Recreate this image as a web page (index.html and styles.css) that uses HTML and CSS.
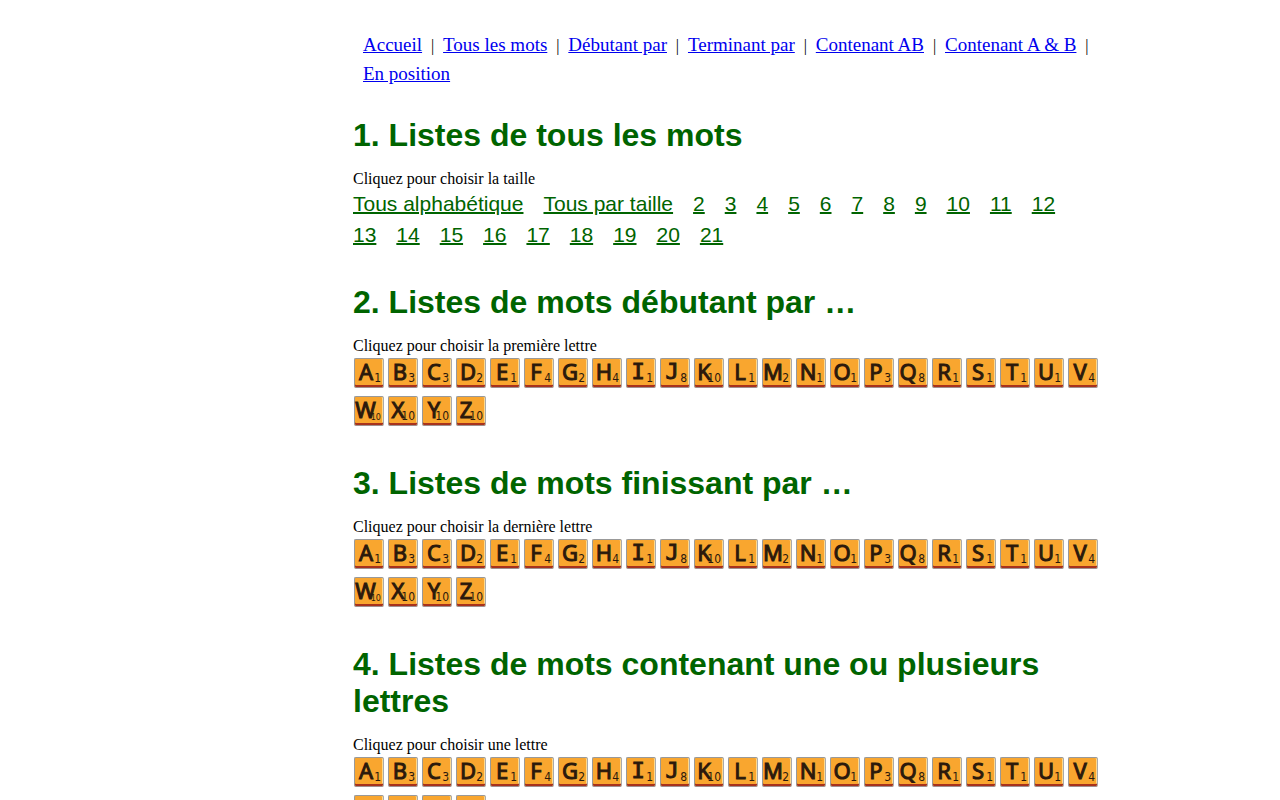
FILE: index.html
```
<!DOCTYPE html>
<html lang="fr">
<head>
    <meta charset="UTF-8">
    <meta name="viewport" content="width=device-width, initial-scale=1.0">
    <title>Listes de mots</title>
    <link rel="stylesheet" href="styles.css">
</head>
<body>
    <div class="page">
        <nav class="menu">
            <a href="#">Accueil</a><span class="sep">|</span>
            <a href="#tous">Tous les mots</a><span class="sep">|</span>
            <a href="#debut">Débutant par</a><span class="sep">|</span>
            <a href="#fin">Terminant par</a><span class="sep">|</span>
            <a href="#contenant">Contenant AB</a><span class="sep">|</span>
            <a href="#contenant">Contenant A &amp; B</a><span class="sep">|</span>
            <a href="#position">En position</a>
        </nav>
        <main>
            <section id="tous">
                <h1>1. Listes de tous les mots</h1>
                <p>Cliquez pour choisir la taille</p>
                <div class="sizes">
                    <a href="#">Tous alphabétique</a>
                    <a href="#">Tous par taille</a>
                    <a href="#">2</a>
                    <a href="#">3</a>
                    <a href="#">4</a>
                    <a href="#">5</a>
                    <a href="#">6</a>
                    <a href="#">7</a>
                    <a href="#">8</a>
                    <a href="#">9</a>
                    <a href="#">10</a>
                    <a href="#">11</a>
                    <a href="#">12</a>
                    <a href="#">13</a>
                    <a href="#">14</a>
                    <a href="#">15</a>
                    <a href="#">16</a>
                    <a href="#">17</a>
                    <a href="#">18</a>
                    <a href="#">19</a>
                    <a href="#">20</a>
                    <a href="#">21</a>
                </div>
            </section>
            <section id="debut">
                <h1>2. Listes de mots débutant par …</h1>
                <p>Cliquez pour choisir la première lettre</p>
                <div class="tiles"></div>
            </section>
            <section id="fin">
                <h1>3. Listes de mots finissant par …</h1>
                <p>Cliquez pour choisir la dernière lettre</p>
                <div class="tiles"></div>
            </section>
            <section id="contenant">
                <h1>4. Listes de mots contenant une ou plusieurs lettres</h1>
                <p>Cliquez pour choisir une lettre</p>
                <div class="tiles"></div>
            </section>
        </main>
    </div>

    <script>
        const points = {
            A: 1, B: 3, C: 3, D: 2, E: 1, F: 4, G: 2, H: 4, I: 1, J: 8, K: 10, L: 1, M: 2,
            N: 1, O: 1, P: 3, Q: 8, R: 1, S: 1, T: 1, U: 1, V: 4, W: 10, X: 10, Y: 10, Z: 10
        };

        document.querySelectorAll('.tiles').forEach((row) => {
            for (const letter in points) {
                const tile = document.createElement('a');
                tile.href = '#' + letter;
                tile.className = 'tile';
                // I and J need a font that draws their bars
                if ('IJ'.includes(letter)) {
                    tile.classList.add('barred');
                }
                // leave room for the points
                if ('KMQWXZ'.includes(letter)) {
                    tile.classList.add('tight');
                }
                if (letter === 'W') {
                    tile.classList.add('wide');
                }
                tile.innerHTML = `<span class="letter">${letter}</span><span class="points">${points[letter]}</span>`;
                row.appendChild(tile);
            }
        });
    </script>
</body>
</html>
```

FILE: styles.css
```
body {
    margin: 0;
    font-family: "Liberation Serif", "Times New Roman", serif;
    font-size: 16px;
    line-height: 18px;
    color: #000;
    background-color: #fff;
}
.page {
    max-width: 750px;
    margin: 0 auto;
    padding: 30px 0 30px 176px;
}
.menu {
    display: flex;
    flex-wrap: wrap;
    align-items: baseline;
    padding-left: 10px;
    font-size: 19px;
    line-height: 29px;
}
.menu a {
    color: #0000ee;
}
.sep {
    width: 21px;
    font-size: 16px;
    line-height: 16px;
    text-align: center;
}
section {
    margin-bottom: 34px;
}
main {
    padding-top: 29px;
}
h1 {
    margin: 0 0 16px;
    font-family: "Liberation Sans", Arial, sans-serif;
    font-size: 32px;
    line-height: 37px;
    color: #006400;
}
p {
    margin: 0;
}
.sizes {
    display: flex;
    flex-wrap: wrap;
    font-family: "Liberation Sans", Arial, sans-serif;
    font-size: 21px;
    line-height: 31px;
}
.sizes a {
    margin-right: 20px;
    color: #006400;
    text-decoration-thickness: 2px;
}
.tiles {
    display: flex;
    flex-wrap: wrap;
    gap: 8px 4px;
    padding: 3px 1px 5px;
}
.tile {
    position: relative;
    box-sizing: border-box;
    width: 30px;
    height: 30px;
    border: 1px solid #999;
    border-right-color: #aaa;
    border-bottom-color: #a09090;
    border-radius: 2px;
    background-color: #f9a62f;
    box-shadow: inset 0 -2px #a8321c, inset -1px 0 #fdd98f;
    color: #2b190c;
    text-decoration: none;
}
.letter {
    position: absolute;
    top: 0;
    left: 0;
    width: 22px;
    font-family: "Noto Sans", sans-serif;
    font-size: 22px;
    line-height: 24px;
    text-align: center;
    -webkit-text-stroke: 1px #2b190c;
}
.barred .letter {
    font-family: "DejaVu Sans Mono", monospace;
    line-height: 26px;
}
.tight .letter {
    width: 18px;
}
.points {
    position: absolute;
    right: 2px;
    bottom: 3px;
    font-family: "DejaVu Sans Condensed", "DejaVu Sans", sans-serif;
    font-size: 12px;
    line-height: 12px;
}
.wide .letter {
    width: 21px;
}
.wide .points {
    font-size: 9px;
    line-height: 9px;
}
```
